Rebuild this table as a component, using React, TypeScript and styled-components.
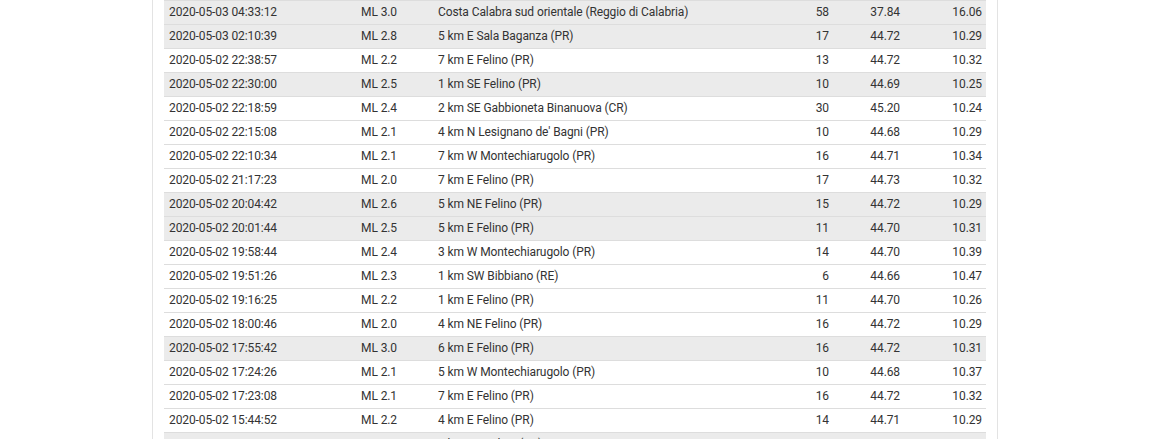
import React from "react";
import styled, { createGlobalStyle } from "styled-components";

const GlobalStyle = createGlobalStyle`
  html, body {
    margin: 0;
    padding: 0;
    background: #ffffff;
  }
  body {
    font-family: "Roboto", "Liberation Sans", sans-serif;
    color: #333333;
  }
`;

const Page = styled.div`
  display: flex;
  justify-content: center;
  padding-right: 20px;
  height: 439px;
  overflow: hidden;
`;

const Panel = styled.div`
  width: 822px;
  padding: 0 11px;
  border-left: 1px solid #e3e3e3;
  border-right: 1px solid #e3e3e3;
  background: #ffffff;
`;

const Table = styled.table`
  width: 100%;
  border-collapse: collapse;
  table-layout: fixed;
  font-size: 12px;
  letter-spacing: -0.1px;
`;

const Col = styled.col<{ $w: number }>`
  width: ${(p) => p.$w}px;
`;

const Row = styled.tr<{ $strong: boolean }>`
  background: ${(p) => (p.$strong ? "#ebebeb" : "#ffffff")};
  border-top: 1px solid #dddddd;
`;

const Cell = styled.td<{ $right?: boolean }>`
  height: 23px;
  padding: 0 4px 0 5px;
  text-align: ${(p) => (p.$right ? "right" : "left")};
  white-space: nowrap;
  overflow: hidden;
  line-height: 23px;
`;

type Quake = [string, number, string, number, string, string];

const quakes: Quake[] = [
  ["2020-05-03 04:33:12", 3.0, "Costa Calabra sud orientale (Reggio di Calabria)", 58, "37.84", "16.06"],
  ["2020-05-03 02:10:39", 2.8, "5 km E Sala Baganza (PR)", 17, "44.72", "10.29"],
  ["2020-05-02 22:38:57", 2.2, "7 km E Felino (PR)", 13, "44.72", "10.32"],
  ["2020-05-02 22:30:00", 2.5, "1 km SE Felino (PR)", 10, "44.69", "10.25"],
  ["2020-05-02 22:18:59", 2.4, "2 km SE Gabbioneta Binanuova (CR)", 30, "45.20", "10.24"],
  ["2020-05-02 22:15:08", 2.1, "4 km N Lesignano de' Bagni (PR)", 10, "44.68", "10.29"],
  ["2020-05-02 22:10:34", 2.1, "7 km W Montechiarugolo (PR)", 16, "44.71", "10.34"],
  ["2020-05-02 21:17:23", 2.0, "7 km E Felino (PR)", 17, "44.73", "10.32"],
  ["2020-05-02 20:04:42", 2.6, "5 km NE Felino (PR)", 15, "44.72", "10.29"],
  ["2020-05-02 20:01:44", 2.5, "5 km E Felino (PR)", 11, "44.70", "10.31"],
  ["2020-05-02 19:58:44", 2.4, "3 km W Montechiarugolo (PR)", 14, "44.70", "10.39"],
  ["2020-05-02 19:51:26", 2.3, "1 km SW Bibbiano (RE)", 6, "44.66", "10.47"],
  ["2020-05-02 19:16:25", 2.2, "1 km E Felino (PR)", 11, "44.70", "10.26"],
  ["2020-05-02 18:00:46", 2.0, "4 km NE Felino (PR)", 16, "44.72", "10.29"],
  ["2020-05-02 17:55:42", 3.0, "6 km E Felino (PR)", 16, "44.72", "10.31"],
  ["2020-05-02 17:24:26", 2.1, "5 km W Montechiarugolo (PR)", 10, "44.68", "10.37"],
  ["2020-05-02 17:23:08", 2.1, "7 km E Felino (PR)", 16, "44.72", "10.32"],
  ["2020-05-02 15:44:52", 2.2, "4 km E Felino (PR)", 14, "44.71", "10.29"],
  ["2020-05-02 15:34:24", 3.0, "4 km NE Felino (PR)", 15, "44.73", "10.31"],
];

export default function App() {
  return (
    <Page>
      <GlobalStyle />
      <Panel>
        <Table>
          <colgroup>
            <Col $w={192} />
            <Col $w={77} />
            <Col $w={340} />
            <Col $w={60} />
            <Col $w={71} />
            <Col $w={82} />
          </colgroup>
          <tbody>
            {quakes.map((q) => (
              <Row key={q[0]} $strong={q[1] >= 2.5}>
                <Cell>{q[0]}</Cell>
                <Cell>ML {q[1].toFixed(1)}</Cell>
                <Cell>{q[2]}</Cell>
                <Cell $right>{q[3]}</Cell>
                <Cell $right>{q[4]}</Cell>
                <Cell $right>{q[5]}</Cell>
              </Row>
            ))}
          </tbody>
        </Table>
      </Panel>
    </Page>
  );
}
